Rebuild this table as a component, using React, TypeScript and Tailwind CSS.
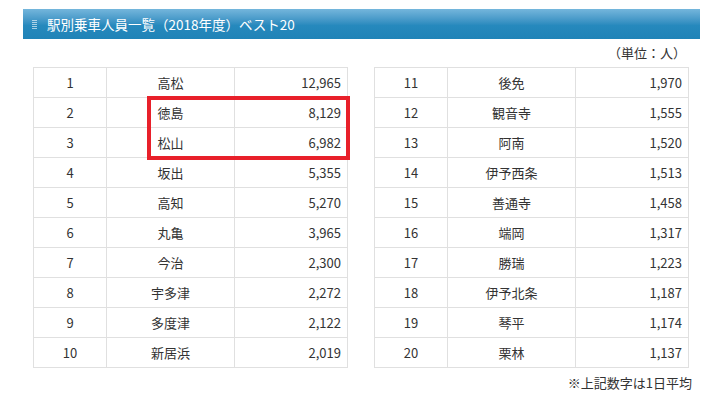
const left: [number, string, string][] = [
  [1, "高松", "12,965"],
  [2, "徳島", "8,129"],
  [3, "松山", "6,982"],
  [4, "坂出", "5,355"],
  [5, "高知", "5,270"],
  [6, "丸亀", "3,965"],
  [7, "今治", "2,300"],
  [8, "宇多津", "2,272"],
  [9, "多度津", "2,122"],
  [10, "新居浜", "2,019"],
];

const right: [number, string, string][] = [
  [11, "後免", "1,970"],
  [12, "観音寺", "1,555"],
  [13, "阿南", "1,520"],
  [14, "伊予西条", "1,513"],
  [15, "善通寺", "1,458"],
  [16, "端岡", "1,317"],
  [17, "勝瑞", "1,223"],
  [18, "伊予北条", "1,187"],
  [19, "琴平", "1,174"],
  [20, "栗林", "1,137"],
];

function RankTable({ rows }: { rows: [number, string, string][] }) {
  return (
    <table className="border-collapse w-[314px] table-fixed">
      <colgroup>
        <col className="w-[73px]" />
        <col className="w-[128px]" />
        <col className="w-[113px]" />
      </colgroup>
      <tbody>
        {rows.map(([n, name, val]) => (
          <tr key={n} className="h-[30px]">
            <td className="border border-[#e0e0e0] text-center p-0">{n}</td>
            <td className="border border-[#e0e0e0] text-center p-0">{name}</td>
            <td className="border border-[#e0e0e0] text-right pr-[6px] p-0">{val}</td>
          </tr>
        ))}
      </tbody>
    </table>
  );
}

export default function App() {
  return (
    <div className="w-[714px] h-[398px] bg-white text-[#333] text-[13px] leading-[18px] font-['Meiryo','Noto_Sans_CJK_JP',sans-serif] overflow-hidden">
      <div className="ml-[23px] w-[677px] pt-[9px]">
        {/* title bar */}
        <div className="h-[30px] flex items-center bg-gradient-to-b from-[#74b6dc] via-[#2689bd] via-55% to-[#1f83b7] text-white text-[13.5px]">
          <div className="ml-[9px] flex flex-col gap-[1px] w-[5px]">
            <div className="h-px bg-white/60" />
            <div className="h-px bg-white/60" />
            <div className="h-px bg-white/60" />
            <div className="h-px bg-white/60" />
            <div className="h-px bg-white/60" />
          </div>
          <div className="ml-[10px]">駅別乗車人員一覧（2018年度）ベスト20</div>
        </div>

        <div className="h-[28px] flex items-center justify-end pr-[14px]">（単位：人）</div>

        {/* tables */}
        <div className="flex gap-[26px] pl-[10px]">
          <div className="relative">
            <RankTable rows={left} />
            <div className="absolute left-[114px] top-[29px] w-[203px] h-[64px] border-4 border-[#e8202a]" />
          </div>
          <RankTable rows={right} />
        </div>

        <div className="h-[30px] flex items-center justify-end mr-[8px]">※上記数字は1日平均</div>
      </div>
    </div>
  );
}
